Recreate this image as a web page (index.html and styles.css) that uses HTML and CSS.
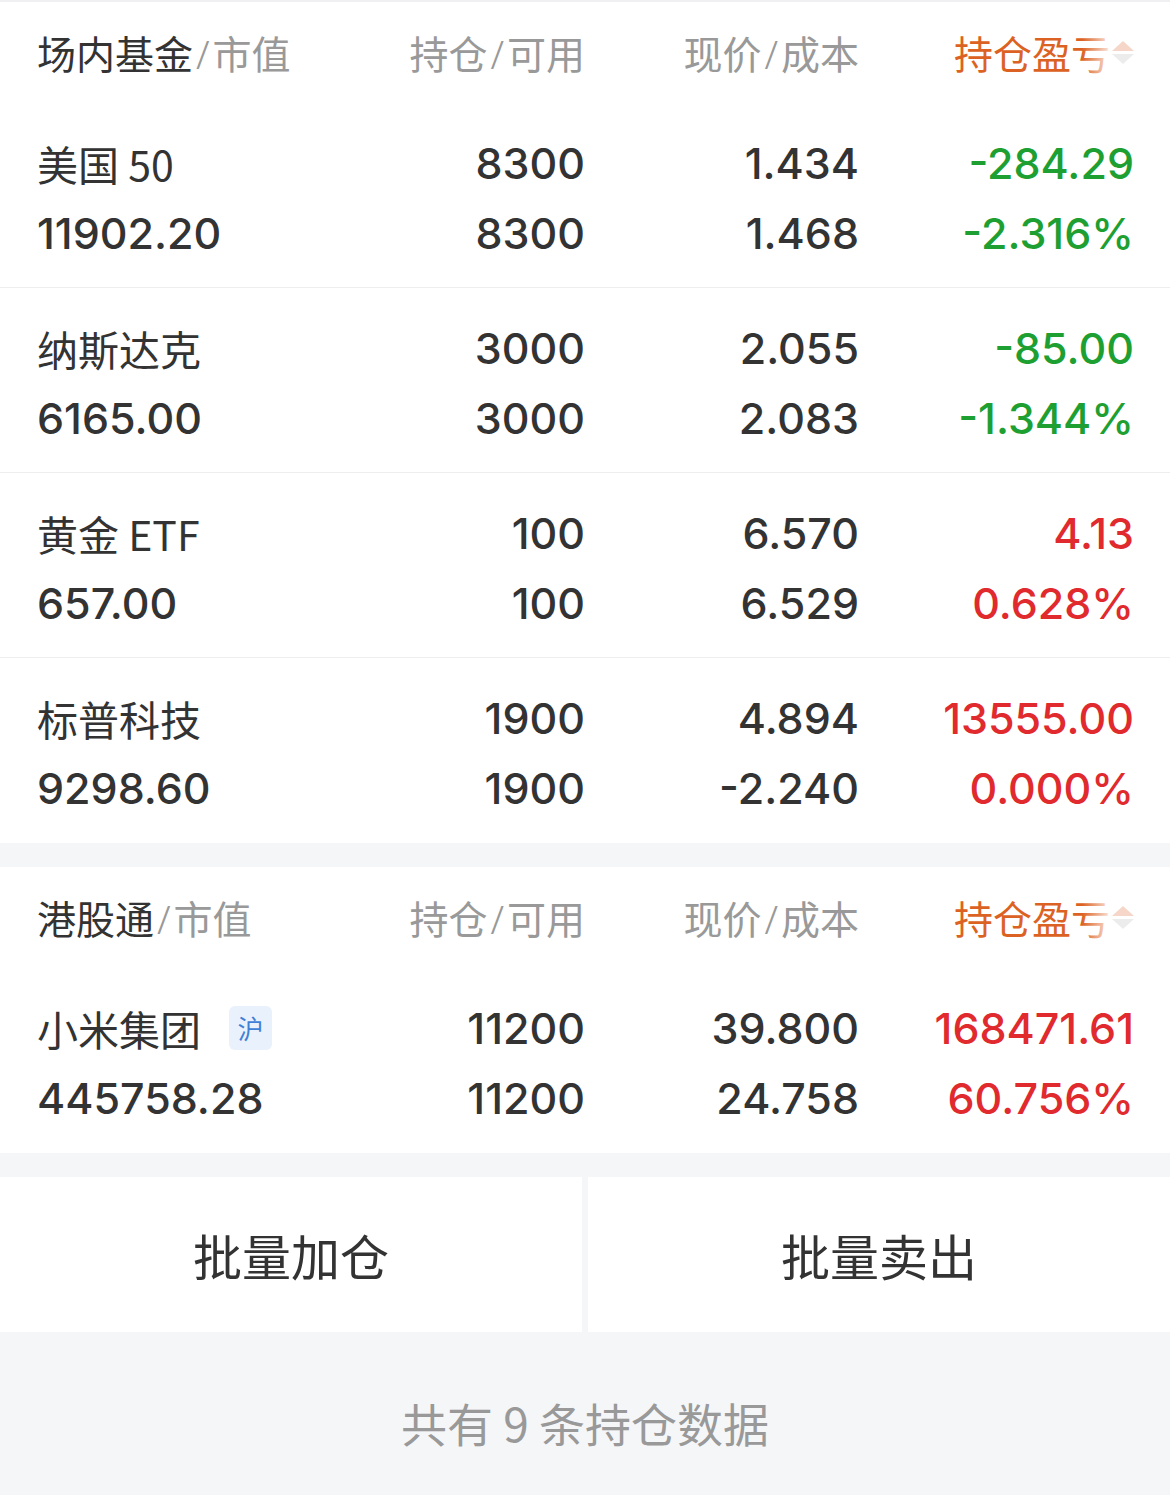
FILE: index.html
```html
<!DOCTYPE html>
<html lang="zh-CN">
<head>
    <meta charset="UTF-8">
    <meta name="viewport" content="width=device-width, initial-scale=1.0">
    <title>持仓</title>
    <link rel="stylesheet" href="styles.css">
</head>
<body>
    <div class="page">
        <section class="group">
            <div class="head">
                <div class="col-name"><span class="title">场内基金</span><span class="sep">/</span><span class="sub">市值</span></div>
                <div class="col-num">持仓<span class="sep">/</span>可用</div>
                <div class="col-num">现价<span class="sep">/</span>成本</div>
                <div class="col-num sort">持仓盈亏<span class="sort-icon"><i class="up"></i><i class="down"></i></span></div>
            </div>

            <div class="row">
                <div class="cell name-cell">
                    <div class="name">美国 50</div>
                    <div class="num">11902.20</div>
                </div>
                <div class="cell num-cell"><div class="num">8300</div><div class="num">8300</div></div>
                <div class="cell num-cell"><div class="num">1.434</div><div class="num">1.468</div></div>
                <div class="cell num-cell down-c"><div class="num">-284.29</div><div class="num">-2.316%</div></div>
            </div>

            <div class="row">
                <div class="cell name-cell">
                    <div class="name">纳斯达克</div>
                    <div class="num">6165.00</div>
                </div>
                <div class="cell num-cell"><div class="num">3000</div><div class="num">3000</div></div>
                <div class="cell num-cell"><div class="num">2.055</div><div class="num">2.083</div></div>
                <div class="cell num-cell down-c"><div class="num">-85.00</div><div class="num">-1.344%</div></div>
            </div>

            <div class="row">
                <div class="cell name-cell">
                    <div class="name">黄金 ETF</div>
                    <div class="num">657.00</div>
                </div>
                <div class="cell num-cell"><div class="num">100</div><div class="num">100</div></div>
                <div class="cell num-cell"><div class="num">6.570</div><div class="num">6.529</div></div>
                <div class="cell num-cell up-c"><div class="num">4.13</div><div class="num">0.628%</div></div>
            </div>

            <div class="row">
                <div class="cell name-cell">
                    <div class="name">标普科技</div>
                    <div class="num">9298.60</div>
                </div>
                <div class="cell num-cell"><div class="num">1900</div><div class="num">1900</div></div>
                <div class="cell num-cell"><div class="num">4.894</div><div class="num">-2.240</div></div>
                <div class="cell num-cell up-c"><div class="num">13555.00</div><div class="num">0.000%</div></div>
            </div>
        </section>

        <section class="group">
            <div class="head">
                <div class="col-name"><span class="title">港股通</span><span class="sep">/</span><span class="sub">市值</span></div>
                <div class="col-num">持仓<span class="sep">/</span>可用</div>
                <div class="col-num">现价<span class="sep">/</span>成本</div>
                <div class="col-num sort">持仓盈亏<span class="sort-icon"><i class="up"></i><i class="down"></i></span></div>
            </div>

            <div class="row">
                <div class="cell name-cell">
                    <div class="name">小米集团<span class="badge">沪</span></div>
                    <div class="num">445758.28</div>
                </div>
                <div class="cell num-cell"><div class="num">11200</div><div class="num">11200</div></div>
                <div class="cell num-cell"><div class="num">39.800</div><div class="num">24.758</div></div>
                <div class="cell num-cell up-c"><div class="num">168471.61</div><div class="num">60.756%</div></div>
            </div>
        </section>

        <div class="actions">
            <button class="action">批量加仓</button>
            <button class="action">批量卖出</button>
        </div>

        <div class="footer">共有 9 条持仓数据</div>
    </div>
</body>
</html>
```

FILE: styles.css
```css
* {
    margin: 0;
    padding: 0;
    box-sizing: border-box;
}

body {
    background: #f5f6f8;
    font-family: "Noto Sans CJK SC", "Noto Sans", sans-serif;
    color: #333;
}

.page {
    border-top: 2px solid #f0f0f2;
}

.group {
    background: #fff;
    margin-bottom: 24px;
}

.head,
.row {
    display: grid;
    grid-template-columns: 302px 246px 274px 1fr;
    padding: 0 36px 0 37px;
}

.head {
    height: 101px;
    align-items: center;
    font-size: 39px;
    line-height: 1;
    color: #999;
}

.head .title {
    color: #333;
}

.head .sep {
    display: inline-block;
    margin: 0 3px;
    font-family: "Noto Sans", sans-serif;
    font-weight: 300;
    color: #999;
}

.col-num {
    text-align: right;
}

.sort {
    color: #dc6224;
    position: relative;
    padding-right: 24px;
}

.sort-icon {
    position: absolute;
    right: 0;
    top: -4px;
    bottom: -4px;
    width: 52px;
    background: linear-gradient(to right, rgba(255, 255, 255, 0), rgba(255, 255, 255, 0.85) 55%, #fff 75%);
    display: flex;
    flex-direction: column;
    align-items: flex-end;
    justify-content: center;
    gap: 3px;
}

.sort-icon i {
    width: 0;
    height: 0;
    border-left: 11px solid transparent;
    border-right: 11px solid transparent;
}

.sort-icon .up {
    border-bottom: 10px solid #f6d6c8;
}

.sort-icon .down {
    border-top: 10px solid #ececec;
}

.row {
    padding-top: 25px;
    padding-bottom: 19px;
    border-bottom: 1px solid #eeeeee;
}

.row:last-child {
    border-bottom: none;
    padding-bottom: 20px;
}

.cell > div {
    height: 70px;
    line-height: 70px;
    white-space: nowrap;
}

.num-cell {
    text-align: right;
}

.name {
    font-size: 41px;
    display: flex;
    align-items: center;
    white-space: pre;
}

.num {
    font-family: Inter, Roboto, sans-serif;
    font-weight: 500;
    font-size: 43px;
    color: #333;
}

.up-c .num {
    color: #e02a2e;
}

.down-c .num {
    color: #1e9f32;
}

.badge {
    display: inline-flex;
    align-items: center;
    justify-content: center;
    width: 43px;
    height: 44px;
    margin-left: 28px;
    border-radius: 6px;
    background: #e9f1fd;
    color: #3f7fd6;
    font-size: 26px;
    line-height: 1;
}

.actions {
    display: flex;
    gap: 6px;
    margin-top: 1px;
}

.action {
    flex: 1;
    height: 155px;
    border: none;
    background: #fff;
    font-family: "Noto Sans CJK SC", sans-serif;
    font-size: 49px;
    color: #333;
}

.footer {
    height: 162px;
    padding-top: 67px;
    text-align: center;
    font-size: 46px;
    line-height: 1;
    color: #999;
}
```
